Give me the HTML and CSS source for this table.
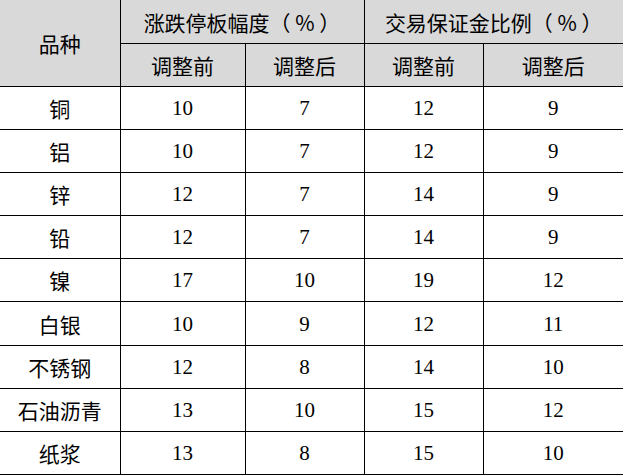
FILE: index.html
```html
<!DOCTYPE html>
<html lang="zh-CN">
<head>
<meta charset="utf-8">
<title>调整表</title>
<link rel="stylesheet" href="styles.css">
</head>
<body>
<table class="adj">
  <colgroup>
    <col class="c1"><col class="c2"><col class="c3"><col class="c4"><col class="c5">
  </colgroup>
  <thead>
    <tr class="h1">
      <th rowspan="2" class="first">品种</th>
      <th colspan="2">涨跌停板幅度（ % ）</th>
      <th colspan="2" class="last">交易保证金比例（ % ）</th>
    </tr>
    <tr class="h2">
      <th>调整前</th><th>调整后</th><th>调整前</th><th class="last">调整后</th>
    </tr>
  </thead>
  <tbody>
    <tr><td class="name first">铜</td><td>10</td><td>7</td><td>12</td><td class="last">9</td></tr>
    <tr><td class="name first">铝</td><td>10</td><td>7</td><td>12</td><td class="last">9</td></tr>
    <tr><td class="name first">锌</td><td>12</td><td>7</td><td>14</td><td class="last">9</td></tr>
    <tr><td class="name first">铅</td><td>12</td><td>7</td><td>14</td><td class="last">9</td></tr>
    <tr><td class="name first">镍</td><td>17</td><td>10</td><td>19</td><td class="last">12</td></tr>
    <tr><td class="name first">白银</td><td>10</td><td>9</td><td>12</td><td class="last">11</td></tr>
    <tr><td class="name first">不锈钢</td><td>12</td><td>8</td><td>14</td><td class="last">10</td></tr>
    <tr><td class="name first">石油沥青</td><td>13</td><td>10</td><td>15</td><td class="last">12</td></tr>
    <tr><td class="name first">纸浆</td><td>13</td><td>8</td><td>15</td><td class="last">10</td></tr>
  </tbody>
</table>
</body>
</html>
```
FILE: styles.css
```css
html, body {
  margin: 0;
  padding: 0;
  background: #ffffff;
}

.adj {
  width: 623px;
  border-collapse: collapse;
  table-layout: fixed;
  font-family: "Liberation Serif", "Noto Sans CJK SC", serif;
  font-size: 21px;
  color: #000000;
}

.c1 { width: 120px; }
.c2 { width: 125px; }
.c3 { width: 119px; }
.c4 { width: 119px; }
.c5 { width: 140px; }

.adj th,
.adj td {
  border: 1px solid #000000;
  padding: 0;
  text-align: center;
  vertical-align: middle;
  line-height: 24px;
}

.adj th {
  background: #d9d9d9;
  font-family: "Noto Sans CJK SC", sans-serif;
  font-weight: normal;
  font-size: 21px;
  white-space: nowrap;
}

.adj .h1 th {
  border-top: none;
  height: 43px;
}

.adj .h2 th {
  height: 42px;
}

.adj tbody td {
  height: 42.1px;
}

.adj .first {
  border-left: none;
}

.adj .last {
  border-right: none;
}

.adj td.name {
  font-family: "Noto Sans CJK SC", sans-serif;
}
```
